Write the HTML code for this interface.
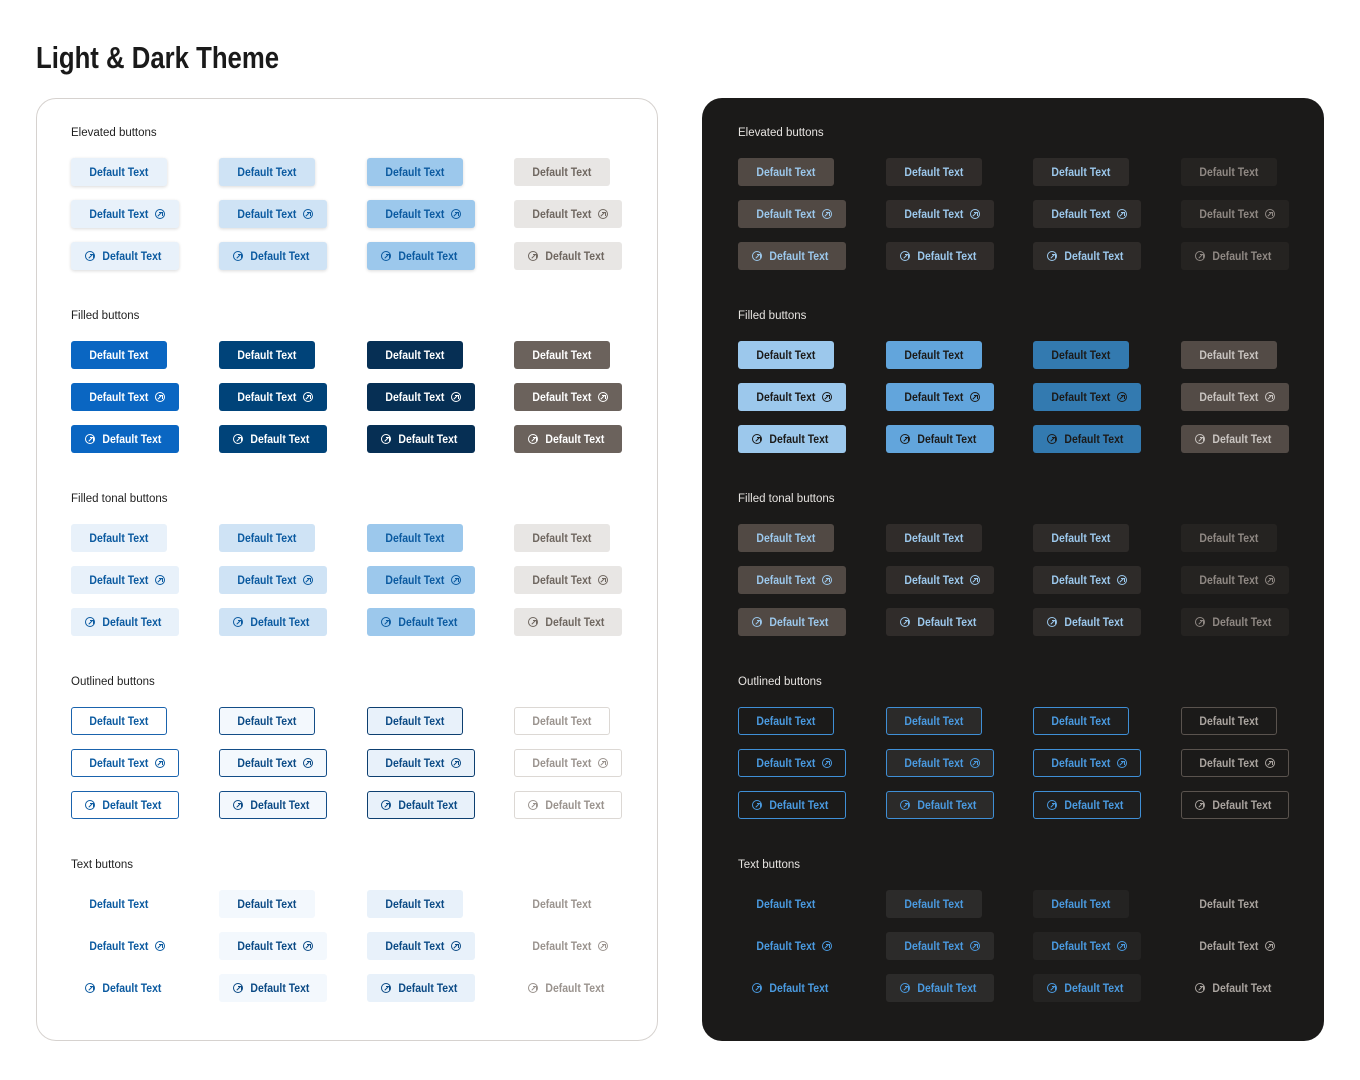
<!DOCTYPE html>
<html><head><meta charset="utf-8"><style>
*{margin:0;padding:0;box-sizing:border-box}
body{width:1360px;height:1080px;background:#fff;font-family:"Liberation Sans",sans-serif;position:relative;overflow:hidden}
h1{position:absolute;left:36px;top:40px;font-weight:700;font-size:31px;color:#1a1a1a;transform:scaleX(.83);transform-origin:left center;white-space:nowrap}
.panel{position:absolute;top:98px;width:622px;height:943px;border-radius:20px;padding:28px 0 0 36px}
.light{left:36px;border:1px solid #d6d2cf;background:#fff;padding-left:34px;padding-top:27px}
.dark{left:702px;background:#1b1a19}
.sec{height:183px}
.sec p{font-size:11.5px;line-height:14px;height:32px;color:#1f1f1f}
.dark .sec p{color:#e6e3e0}
.g{display:grid;grid-template-columns:148px 147px 148px 148px;grid-auto-rows:28px;row-gap:14px}
.light .g{grid-template-columns:148px 148px 147px 148px}
b{display:flex;align-items:center;justify-content:center;gap:7px;width:96px;height:28px;border-radius:3px;font-weight:700;font-size:12px;white-space:nowrap;border:1px solid transparent}
b span{display:inline-block;transform:scaleX(.87);margin:0 -4.6px}
b.t,b.l{width:108px}
b.t{padding-left:4px}
b.l{padding-right:4px}
i{display:inline-block;width:10px;height:10px;border:1px solid currentColor;border-radius:50%;position:relative;flex:none}
i::after{content:"";position:absolute;left:3.5px;top:2px;width:3px;height:3px;border-top:1px solid currentColor;border-right:1px solid currentColor}
i::before{content:"";position:absolute;left:1.7px;top:3.7px;width:5px;height:1px;background:currentColor;transform:rotate(-45deg)}
.light b{color:#0b5aa0}
.light .el b,.light .to b{background:#e8f1fa}
.light .el b:nth-child(4n+2),.light .to b:nth-child(4n+2){background:#cfe3f5}
.light .el b:nth-child(4n+3),.light .to b:nth-child(4n+3){background:#9cc8ec}
.light .el b:nth-child(4n),.light .to b:nth-child(4n){background:#e8e6e4;color:#6f6760}
.light .el b{box-shadow:0 1px 3px rgba(0,0,0,.15)}
.light .el b:nth-child(4n){box-shadow:none}
.light .fi b{background:#0a66c2;color:#fff}
.light .fi b:nth-child(4n+2){background:#004379}
.light .fi b:nth-child(4n+3){background:#062f54}
.light .fi b:nth-child(4n){background:#6b625c}
.light .ou b{background:#fff;border-color:#1a63ad}
.light .ou b:nth-child(4n+2){background:#f3f8fd;border-color:#134d87;color:#0b4a85}
.light .ou b:nth-child(4n+3){background:#e8f1fa;border-color:#0d3f70;color:#0b4a85}
.light .ou b:nth-child(4n){border-color:#dcd8d4;color:#9a938e}
.light .tx b:nth-child(4n+2){background:#f3f8fd;color:#0b4a85}
.light .tx b:nth-child(4n+3){background:#e8f1fa;color:#0b4a85}
.light .tx b:nth-child(4n){color:#9a938e}
.dark b{color:#9cc8ec}
.dark .el b,.dark .to b{background:#514944}
.dark .el b:nth-child(4n+2),.dark .to b:nth-child(4n+2){background:#302c2a}
.dark .el b:nth-child(4n+3),.dark .to b:nth-child(4n+3){background:#2e2b29}
.dark .el b:nth-child(4n),.dark .to b:nth-child(4n){background:#252321;color:#8f8883}
.dark .fi b{background:#9cc8ec;color:#1b1a19}
.dark .fi b:nth-child(4n+2){background:#62a5dc}
.dark .fi b:nth-child(4n+3){background:#337ab0}
.dark .fi b:nth-child(4n){background:#534b46;color:#c9c4c0}
.dark .ou b{border-color:#3f8fd6;color:#4a9ae0}
.dark .ou b:nth-child(4n+2){background:#2b2a29}
.dark .ou b:nth-child(4n+3){background:#1e1e1e}
.dark .ou b:nth-child(4n){border-color:#5a534e;color:#aaa49f}
.dark .tx b{color:#4a9ae0}
.dark .tx b:nth-child(4n+2){background:#2c2b2a}
.dark .tx b:nth-child(4n+3){background:#242322}
.dark .tx b:nth-child(4n){color:#aaa49f}
</style></head><body>
<h1>Light &amp; Dark Theme</h1>

<div class="panel light">
<div class="sec el"><p>Elevated buttons</p><div class="g">
<b><span>Default Text</span></b><b><span>Default Text</span></b><b><span>Default Text</span></b><b><span>Default Text</span></b>
<b class="t"><span>Default Text</span><i></i></b><b class="t"><span>Default Text</span><i></i></b><b class="t"><span>Default Text</span><i></i></b><b class="t"><span>Default Text</span><i></i></b>
<b class="l"><i></i><span>Default Text</span></b><b class="l"><i></i><span>Default Text</span></b><b class="l"><i></i><span>Default Text</span></b><b class="l"><i></i><span>Default Text</span></b>
</div></div>
<div class="sec fi"><p>Filled buttons</p><div class="g">
<b><span>Default Text</span></b><b><span>Default Text</span></b><b><span>Default Text</span></b><b><span>Default Text</span></b>
<b class="t"><span>Default Text</span><i></i></b><b class="t"><span>Default Text</span><i></i></b><b class="t"><span>Default Text</span><i></i></b><b class="t"><span>Default Text</span><i></i></b>
<b class="l"><i></i><span>Default Text</span></b><b class="l"><i></i><span>Default Text</span></b><b class="l"><i></i><span>Default Text</span></b><b class="l"><i></i><span>Default Text</span></b>
</div></div>
<div class="sec to"><p>Filled tonal buttons</p><div class="g">
<b><span>Default Text</span></b><b><span>Default Text</span></b><b><span>Default Text</span></b><b><span>Default Text</span></b>
<b class="t"><span>Default Text</span><i></i></b><b class="t"><span>Default Text</span><i></i></b><b class="t"><span>Default Text</span><i></i></b><b class="t"><span>Default Text</span><i></i></b>
<b class="l"><i></i><span>Default Text</span></b><b class="l"><i></i><span>Default Text</span></b><b class="l"><i></i><span>Default Text</span></b><b class="l"><i></i><span>Default Text</span></b>
</div></div>
<div class="sec ou"><p>Outlined buttons</p><div class="g">
<b><span>Default Text</span></b><b><span>Default Text</span></b><b><span>Default Text</span></b><b><span>Default Text</span></b>
<b class="t"><span>Default Text</span><i></i></b><b class="t"><span>Default Text</span><i></i></b><b class="t"><span>Default Text</span><i></i></b><b class="t"><span>Default Text</span><i></i></b>
<b class="l"><i></i><span>Default Text</span></b><b class="l"><i></i><span>Default Text</span></b><b class="l"><i></i><span>Default Text</span></b><b class="l"><i></i><span>Default Text</span></b>
</div></div>
<div class="sec tx"><p>Text buttons</p><div class="g">
<b><span>Default Text</span></b><b><span>Default Text</span></b><b><span>Default Text</span></b><b><span>Default Text</span></b>
<b class="t"><span>Default Text</span><i></i></b><b class="t"><span>Default Text</span><i></i></b><b class="t"><span>Default Text</span><i></i></b><b class="t"><span>Default Text</span><i></i></b>
<b class="l"><i></i><span>Default Text</span></b><b class="l"><i></i><span>Default Text</span></b><b class="l"><i></i><span>Default Text</span></b><b class="l"><i></i><span>Default Text</span></b>
</div></div>
</div>

<div class="panel dark">
<div class="sec el"><p>Elevated buttons</p><div class="g">
<b><span>Default Text</span></b><b><span>Default Text</span></b><b><span>Default Text</span></b><b><span>Default Text</span></b>
<b class="t"><span>Default Text</span><i></i></b><b class="t"><span>Default Text</span><i></i></b><b class="t"><span>Default Text</span><i></i></b><b class="t"><span>Default Text</span><i></i></b>
<b class="l"><i></i><span>Default Text</span></b><b class="l"><i></i><span>Default Text</span></b><b class="l"><i></i><span>Default Text</span></b><b class="l"><i></i><span>Default Text</span></b>
</div></div>
<div class="sec fi"><p>Filled buttons</p><div class="g">
<b><span>Default Text</span></b><b><span>Default Text</span></b><b><span>Default Text</span></b><b><span>Default Text</span></b>
<b class="t"><span>Default Text</span><i></i></b><b class="t"><span>Default Text</span><i></i></b><b class="t"><span>Default Text</span><i></i></b><b class="t"><span>Default Text</span><i></i></b>
<b class="l"><i></i><span>Default Text</span></b><b class="l"><i></i><span>Default Text</span></b><b class="l"><i></i><span>Default Text</span></b><b class="l"><i></i><span>Default Text</span></b>
</div></div>
<div class="sec to"><p>Filled tonal buttons</p><div class="g">
<b><span>Default Text</span></b><b><span>Default Text</span></b><b><span>Default Text</span></b><b><span>Default Text</span></b>
<b class="t"><span>Default Text</span><i></i></b><b class="t"><span>Default Text</span><i></i></b><b class="t"><span>Default Text</span><i></i></b><b class="t"><span>Default Text</span><i></i></b>
<b class="l"><i></i><span>Default Text</span></b><b class="l"><i></i><span>Default Text</span></b><b class="l"><i></i><span>Default Text</span></b><b class="l"><i></i><span>Default Text</span></b>
</div></div>
<div class="sec ou"><p>Outlined buttons</p><div class="g">
<b><span>Default Text</span></b><b><span>Default Text</span></b><b><span>Default Text</span></b><b><span>Default Text</span></b>
<b class="t"><span>Default Text</span><i></i></b><b class="t"><span>Default Text</span><i></i></b><b class="t"><span>Default Text</span><i></i></b><b class="t"><span>Default Text</span><i></i></b>
<b class="l"><i></i><span>Default Text</span></b><b class="l"><i></i><span>Default Text</span></b><b class="l"><i></i><span>Default Text</span></b><b class="l"><i></i><span>Default Text</span></b>
</div></div>
<div class="sec tx"><p>Text buttons</p><div class="g">
<b><span>Default Text</span></b><b><span>Default Text</span></b><b><span>Default Text</span></b><b><span>Default Text</span></b>
<b class="t"><span>Default Text</span><i></i></b><b class="t"><span>Default Text</span><i></i></b><b class="t"><span>Default Text</span><i></i></b><b class="t"><span>Default Text</span><i></i></b>
<b class="l"><i></i><span>Default Text</span></b><b class="l"><i></i><span>Default Text</span></b><b class="l"><i></i><span>Default Text</span></b><b class="l"><i></i><span>Default Text</span></b>
</div></div>
</div>
</body></html>
